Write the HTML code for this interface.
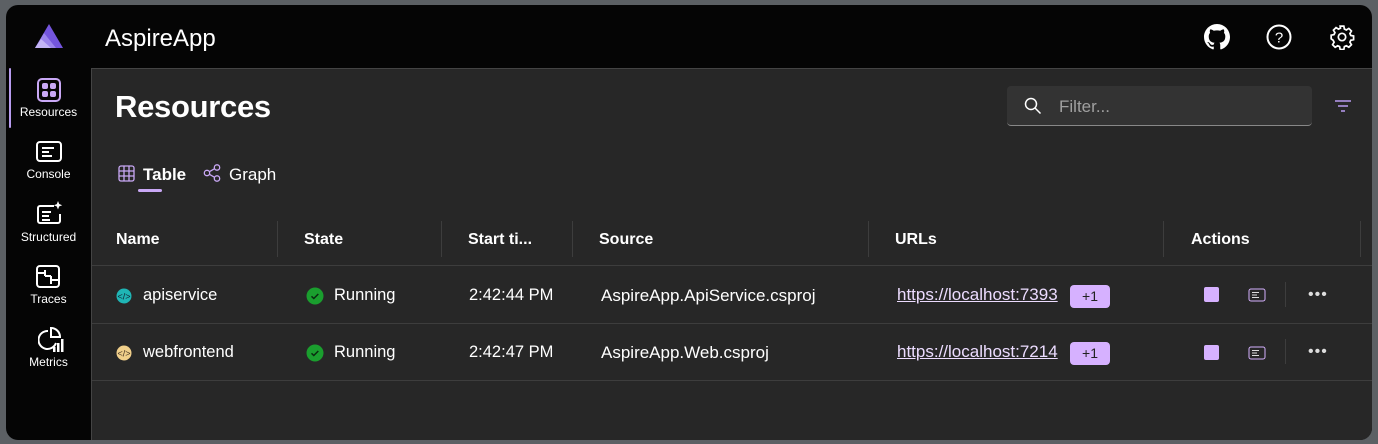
<!DOCTYPE html>
<html><head><style>
*{box-sizing:border-box;margin:0;padding:0}
body{width:1378px;height:444px;background:#5c6064;font-family:"Liberation Sans",sans-serif;overflow:hidden;position:relative}
.win{position:absolute;left:6px;top:5px;width:1366px;height:435px;background:#050505;border-radius:12px;overflow:hidden}
.main{position:absolute;left:85px;top:63px;right:0;bottom:0;background:#272727;border-top:1px solid #444;border-left:1px solid #444}
.t{position:absolute;color:#fff;white-space:nowrap}
.nav{position:absolute;width:85px;text-align:center;color:#fff;font-size:12px}
.hl{position:absolute;left:0;right:0;height:1px;background:#3d3d3d}
.vd{position:absolute;width:1px;background:#3d3d3d;top:152px;height:36px}
.th{font-weight:bold;font-size:16px;top:162px}
.td{font-size:16.5px}
.badge{position:absolute;background:#d6b1ff;color:#222;font-size:14px;border-radius:4px;width:40px;height:23px;text-align:center;line-height:23px}
.link{color:#ecdcff;text-decoration:underline;font-size:17px}
</style></head><body>
<div class="win">
 <svg style="position:absolute;left:27px;top:17px" width="32" height="28" viewBox="0 0 32 28"><path d="M16 2 L30 26 H2Z" fill="#7455dd"/><path d="M11 11 L23 26 H2Z" fill="#9b84ec"/><path d="M8 17 L18 26 H2Z" fill="#c3b4f6"/></svg>
 <div class="t" style="left:99px;top:20px;font-size:24px">AspireApp</div>
 <svg style="position:absolute;left:1198px;top:19px" width="26" height="26" viewBox="0 0 16 16"><path fill="#fff" d="M8 0C3.580 0 0 3.58 0 8c0 3.54 2.29 6.53 5.470 7.59.4.07.55-.17.55-.38v-1.33c-2.23.48-2.7-1.07-2.7-1.07-.36-.92-.89-1.17-.89-1.17-.73-.5.05-.49.05-.49.8.06 1.23.83 1.23.83.72 1.22 1.87.87 2.33.66.07-.52.28-.87.51-1.07-1.78-.2-3.64-.89-3.64-3.95 0-.87.31-1.59.82-2.150-.08-.2-.36-1.02.08-2.12 0 0 .67-.21 2.2.82.64-.18 1.32-.27 2-.27s1.36.09 2 .27c1.53-1.04 2.2-.82 2.2-.82.44 1.1.16 1.92.08 2.12.51.56.82 1.27.82 2.15 0 3.07-1.87 3.75-3.65 3.95.29.25.54.73.54 1.48v2.2c0 .21.15.46.55.38A8.01 8.01 0 0016 8c0-4.42-3.58-8-8-8z"/></svg>
 <svg style="position:absolute;left:1260px;top:19px" width="26" height="26" viewBox="0 0 26 26"><circle cx="13" cy="13" r="11.5" fill="none" stroke="#fff" stroke-width="2"/><text x="13" y="18.5" font-size="15" text-anchor="middle" fill="#fff" font-family="Liberation Sans">?</text></svg>
 <svg style="position:absolute;left:1323px;top:19px" width="26" height="26" viewBox="0 0 24 24"><path fill="none" stroke="#fff" stroke-width="1.6" d="M10.3 2h3.4l.5 2.6 1.8.9 2.3-1.4 2.4 2.4-1.4 2.3.8 1.8 2.6.5v3.4l-2.6.5-.8 1.8 1.4 2.3-2.4 2.4-2.3-1.4-1.8.8-.5 2.6h-3.4l-.5-2.6-1.8-.8-2.3 1.4-2.4-2.4 1.4-2.3-.9-1.8L2 13.7v-3.4l2.6-.5.9-1.8-1.4-2.3 2.4-2.4 2.3 1.4 1.8-.9z"/><circle cx="12" cy="12" r="3.4" fill="none" stroke="#fff" stroke-width="1.6"/></svg>
 <div style="position:absolute;left:3px;top:63px;width:2px;height:60px;background:#b89cf0;border-radius:1px"></div>
 <svg style="position:absolute;left:31px;top:73px" width="24" height="24" viewBox="0 0 24 24"><rect x="1" y="1" width="22" height="22" rx="4" fill="none" stroke="#c9a8f5" stroke-width="2"/><rect x="5" y="5" width="6" height="6" rx="2" fill="#c9a8f5"/><rect x="13" y="5" width="6" height="6" rx="2" fill="#c9a8f5"/><rect x="5" y="13" width="6" height="6" rx="2" fill="#c9a8f5"/><rect x="13" y="13" width="6" height="6" rx="2" fill="#c9a8f5"/></svg>
 <div class="nav" style="top:100px">Resources</div>
 <svg style="position:absolute;left:30px;top:136px" width="26" height="22" viewBox="0 0 26 22"><rect x="1" y="1" width="24" height="19" rx="3" fill="none" stroke="#fff" stroke-width="2"/><path d="M6 7h12M6 11h7M6 15h10" stroke="#fff" stroke-width="2"/></svg>
 <div class="nav" style="top:162px">Console</div>
 <svg style="position:absolute;left:30px;top:196px" width="28" height="24" viewBox="0 0 28 24"><path d="M18 5H4a2 2 0 00-2 2v13a2 2 0 002 2h18a2 2 0 002-2v-7" fill="none" stroke="#fff" stroke-width="2"/><path d="M6 11h9M6 15h7M6 19h8" stroke="#fff" stroke-width="2"/><path d="M22 0l1.2 3 3 1.2-3 1.2L22 8.5l-1.2-3-3-1.2 3-1.2z" fill="#fff"/></svg>
 <div class="nav" style="top:225px">Structured</div>
 <svg style="position:absolute;left:30px;top:260px" width="26" height="24" viewBox="0 0 26 24"><rect x="1" y="1" width="22" height="21" rx="3" fill="none" stroke="#fff" stroke-width="2"/><path d="M1 8h8M9 5v6M9 11h6M15 11v8M15 15h8" stroke="#fff" stroke-width="2"/></svg>
 <div class="nav" style="top:287px">Traces</div>
 <svg style="position:absolute;left:32px;top:321px" width="26" height="28" viewBox="0 0 26 28"><path d="M10 5a9 9 0 108 12" fill="none" stroke="#fff" stroke-width="2"/><path d="M13 2v9h9a9 9 0 00-9-9z" fill="none" stroke="#fff" stroke-width="2"/><rect x="15" y="21" width="2.5" height="5" fill="#fff"/><rect x="19" y="17" width="2.5" height="9" fill="#fff"/><rect x="23" y="13" width="2.5" height="13" fill="#fff"/></svg>
 <div class="nav" style="top:350px">Metrics</div>

 <div class="main">
  <div class="t" style="left:23px;top:20px;font-size:31px;font-weight:bold;letter-spacing:-0.3px">Resources</div>
  <div style="position:absolute;left:915px;top:17px;width:305px;height:40px;background:#333;border-radius:4px;border-bottom:1px solid #888"></div>
  <svg style="position:absolute;left:932px;top:28px" width="18" height="18" viewBox="0 0 18 18"><circle cx="7" cy="7" r="5.5" fill="none" stroke="#fff" stroke-width="1.5"/><path d="M11 11l5.5 5.5" stroke="#fff" stroke-width="1.5"/></svg>
  <div class="t" style="left:967px;top:28px;font-size:17px;color:#a0a0a0">Filter...</div>
  <svg style="position:absolute;left:1242px;top:30px" width="18" height="14" viewBox="0 0 18 14"><path d="M1 2h16M4 7h10M7 12h4" stroke="#b89cf0" stroke-width="1.6"/></svg>
  <svg style="position:absolute;left:26px;top:96px" width="17" height="17" viewBox="0 0 17 17"><rect x="1" y="1" width="15" height="15" rx="2" fill="none" stroke="#c9a8f5" stroke-width="1.3"/><path d="M6 1v15M11 1v15M1 6h15M1 11h15" stroke="#c9a8f5" stroke-width="1.3"/></svg>
  <div class="t" style="left:51px;top:96px;font-size:17px;font-weight:bold">Table</div>
  <div style="position:absolute;left:46px;top:120px;width:24px;height:3px;background:#c9a8f5;border-radius:2px"></div>
  <svg style="position:absolute;left:111px;top:95px" width="18" height="18" viewBox="0 0 18 18"><circle cx="4" cy="9" r="2.7" fill="none" stroke="#c9a8f5" stroke-width="1.3"/><circle cx="14" cy="3.5" r="2.7" fill="none" stroke="#c9a8f5" stroke-width="1.3"/><circle cx="14" cy="14.5" r="2.7" fill="none" stroke="#c9a8f5" stroke-width="1.3"/><path d="M6.4 7.7l5.2-3M6.4 10.3l5.2 3" stroke="#c9a8f5" stroke-width="1.3"/></svg>
  <div class="t" style="left:137px;top:96px;font-size:17px">Graph</div>

  <div class="t th" style="left:24px">Name</div>
  <div class="t th" style="left:212px">State</div>
  <div class="t th" style="left:376px">Start ti...</div>
  <div class="t th" style="left:507px">Source</div>
  <div class="t th" style="left:803px">URLs</div>
  <div class="t th" style="left:1099px">Actions</div>
  <div class="vd" style="left:185px"></div><div class="vd" style="left:349px"></div><div class="vd" style="left:480px"></div><div class="vd" style="left:776px"></div><div class="vd" style="left:1071px"></div><div class="vd" style="left:1268px"></div>
  <div class="hl" style="top:196px"></div><div class="hl" style="top:254px"></div><div class="hl" style="top:311px"></div>

  <svg style="position:absolute;left:24px;top:219px" width="16" height="16"><circle cx="8" cy="8" r="7.5" fill="#1fb5b5"/><text x="8" y="11.5" font-size="9" text-anchor="middle" fill="#123" font-family="Liberation Sans">&lt;/&gt;</text></svg>
  <div class="t td" style="left:51px;top:217px">apiservice</div>
  <svg style="position:absolute;left:24px;top:276px" width="16" height="16"><circle cx="8" cy="8" r="7.5" fill="#f0cf8a"/><text x="8" y="11.5" font-size="9" text-anchor="middle" fill="#432" font-family="Liberation Sans">&lt;/&gt;</text></svg>
  <div class="t td" style="left:51px;top:274px">webfrontend</div>

  <svg style="position:absolute;left:214px;top:218px" width="18" height="18"><circle cx="9" cy="9" r="8.5" fill="#1a9e2e"/><path d="M5.5 9.3l2.3 2.2 4.5-4.5" stroke="#0a2a10" stroke-width="1.5" fill="none"/></svg>
  <div class="t td" style="left:242px;top:217px">Running</div>
  <svg style="position:absolute;left:214px;top:275px" width="18" height="18"><circle cx="9" cy="9" r="8.5" fill="#1a9e2e"/><path d="M5.5 9.3l2.3 2.2 4.5-4.5" stroke="#0a2a10" stroke-width="1.5" fill="none"/></svg>
  <div class="t td" style="left:242px;top:274px">Running</div>

  <div class="t td" style="left:377px;top:217px">2:42:44 PM</div>
  <div class="t td" style="left:377px;top:274px">2:42:47 PM</div>
  <div class="t td" style="left:509px;top:217px;font-size:17px">AspireApp.ApiService.csproj</div>
  <div class="t td" style="left:509px;top:274px;font-size:17px">AspireApp.Web.csproj</div>
  <div class="t link" style="left:805px;top:216px">https://localhost:7393</div>
  <div class="badge" style="left:978px;top:216px">+1</div>
  <div class="t link" style="left:805px;top:273px">https://localhost:7214</div>
  <div class="badge" style="left:978px;top:273px">+1</div>

  <div style="position:absolute;left:1112px;top:218px;width:15px;height:15px;background:#d6b1ff;border-radius:2px"></div>
  <div style="position:absolute;left:1112px;top:276px;width:15px;height:15px;background:#d6b1ff;border-radius:2px"></div>
  <svg style="position:absolute;left:1156px;top:219px" width="18" height="14"><rect x="1" y="1" width="16" height="12" rx="2" fill="none" stroke="#d6b1ff" stroke-width="1"/><path d="M4 4.5h7M4 7h5M4 9.5h7" stroke="#ddd" stroke-width="1"/></svg>
  <svg style="position:absolute;left:1156px;top:277px" width="18" height="14"><rect x="1" y="1" width="16" height="12" rx="2" fill="none" stroke="#d6b1ff" stroke-width="1"/><path d="M4 4.5h7M4 7h5M4 9.5h7" stroke="#ddd" stroke-width="1"/></svg>
  <div style="position:absolute;left:1193px;top:213px;width:1px;height:25px;background:#3d3d3d"></div>
  <div style="position:absolute;left:1193px;top:270px;width:1px;height:25px;background:#3d3d3d"></div>
  <div class="t" style="left:1216px;top:217px;font-size:16px;letter-spacing:1px;color:#ddd">•••</div>
  <div class="t" style="left:1216px;top:274px;font-size:16px;letter-spacing:1px;color:#ddd">•••</div>
 </div>
</div>
</body></html>
